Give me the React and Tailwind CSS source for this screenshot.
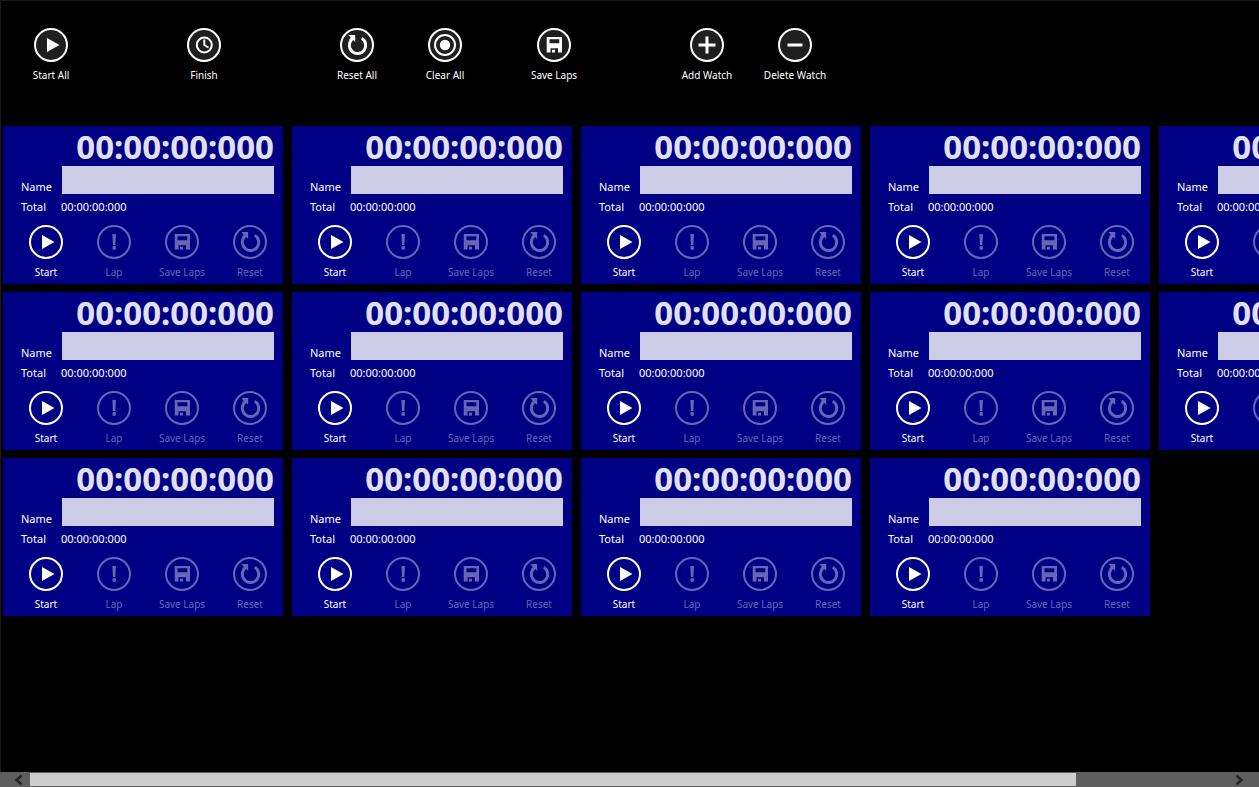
import { cva } from "class-variance-authority";

const glyphs = {
  play: <path d="M13 10 L25.5 17 L13 24 Z" fill="currentColor" />,
  clock: (
    <g fill="none" stroke="currentColor" strokeWidth="2">
      <circle cx="17.3" cy="17" r="7.5" />
      <path d="M17.3 11.5 V17 L21.5 19.5" />
    </g>
  ),
  reset: (
    <g>
      <path d="M21.8 10.3 A8.2 8.2 0 1 1 11.5 11.7" fill="none" stroke="currentColor" strokeWidth="3" />
      <path d="M8.3 7 H15.2 V13.9 L13.2 12 L11 14 L9 12 L10.8 9.8 Z" fill="currentColor" />
    </g>
  ),
  target: (
    <g>
      <circle cx="17" cy="17" r="10" fill="none" stroke="currentColor" strokeWidth="2" />
      <circle cx="17" cy="17" r="5.2" fill="currentColor" />
    </g>
  ),
  save: (
    <path
      fillRule="evenodd"
      fill="currentColor"
      d="M9.7 9 H25 V24.5 H21 V20.2 H13.5 V24.5 H9.7 Z M12.5 11.3 V15.3 H22.3 V11.3 Z M15 21.8 H18 V24.5 H15 Z"
    />
  ),
  alert: (
    <g fill="currentColor">
      <path d="M15.4 9 H18.9 L18.4 20 H15.9 Z" />
      <circle cx="17.2" cy="23" r="1.9" />
    </g>
  ),
  plus: <path d="M8.5 17 H25.5 M17 8.5 V25.5" fill="none" stroke="currentColor" strokeWidth="3" />,
  minus: <path d="M9.5 17 H24.5" fill="none" stroke="currentColor" strokeWidth="3" />,
};

const barButton = cva("flex shrink-0 flex-col items-center gap-[5px] text-[10px] leading-4", {
  variants: {
    size: { bar: "w-22", card: "w-17" },
    disabled: { true: "text-[#6666b5]", false: "text-white" },
  },
});

const AppBarButton = ({ icon, label, size = "bar", disabled = false }) => (
  <button type="button" disabled={disabled} className={barButton({ size, disabled })}>
    <svg viewBox="0 0 34 34" className="size-[34px]" aria-hidden="true">
      <circle
        cx="17"
        cy="17"
        r="16"
        fill={size === "bar" ? "#1f1f1f" : "none"}
        stroke="currentColor"
        strokeWidth="2"
      />
      {glyphs[icon]}
    </svg>
    <span className="whitespace-nowrap">{label}</span>
  </button>
);

const Toolbar = () => (
  <header className="flex pt-[27px] pl-[6px]">
    <div className="flex gap-[65px]">
      <AppBarButton icon="play" label="Start All" />
      <AppBarButton icon="clock" label="Finish" />
      <AppBarButton icon="reset" label="Reset All" />
    </div>
    <AppBarButton icon="target" label="Clear All" />
    <div className="ml-[21px] flex gap-[65px]">
      <AppBarButton icon="save" label="Save Laps" />
      <AppBarButton icon="plus" label="Add Watch" />
    </div>
    <AppBarButton icon="minus" label="Delete Watch" />
  </header>
);

const StopWatch = ({ id, time, total }) => (
  <section className="h-[158px] bg-[#000084] pt-[3px] text-[11px] leading-4 text-white">
    <div className="pr-[9px] text-right text-[33px] leading-9 font-bold text-[#e0e0f2]">{time}</div>
    <div className="mt-px flex items-end pr-[9px] pl-[18px]">
      <label htmlFor={id} className="w-[41px] leading-[14px]">
        Name
      </label>
      <input id={id} type="text" className="h-7 min-w-0 flex-1 bg-[#cccce6] px-2 text-black outline-none" />
    </div>
    <div className="mt-[5px] flex pl-[18px]">
      <span className="w-10">Total</span>
      <span>{total}</span>
    </div>
    <div className="mt-[10px] flex pl-[9px]">
      <AppBarButton size="card" icon="play" label="Start" />
      <AppBarButton size="card" icon="alert" label="Lap" disabled />
      <AppBarButton size="card" icon="save" label="Save Laps" disabled />
      <AppBarButton size="card" icon="reset" label="Reset" disabled />
    </div>
  </section>
);

const ScrollBar = () => (
  <div className="flex h-[15px] bg-[#5e5e5e] text-[#222222]">
    <button type="button" aria-label="Scroll left" className="flex w-[30px] items-center justify-end pr-[7px]">
      <svg viewBox="0 0 9 10" className="h-[10px] w-[9px]" aria-hidden="true">
        <path d="M7.5 0.5 L2.5 5 L7.5 9.5" fill="none" stroke="currentColor" strokeWidth="2.4" />
      </svg>
    </button>
    <div className="flex-1 py-px">
      <div className="h-full w-[87.2%] bg-[#cdcdcd]" />
    </div>
    <button type="button" aria-label="Scroll right" className="flex w-[30px] items-center pl-[6px]">
      <svg viewBox="0 0 9 10" className="h-[10px] w-[9px]" aria-hidden="true">
        <path d="M1.5 0.5 L6.5 5 L1.5 9.5" fill="none" stroke="currentColor" strokeWidth="2.4" />
      </svg>
    </button>
  </div>
);

const watches = Array.from({ length: 14 }, (_, i) => ({
  id: `watch-${i + 1}`,
  time: "00:00:00:000",
  total: "00:00:00:000",
}));

const App = () => (
  <div className="flex min-h-screen flex-col bg-black font-['Noto_Sans',sans-serif]">
    <div className="flex flex-1 flex-col border-t border-l border-[#1a1a1a]">
      <Toolbar />
      <main className="grid auto-cols-[280px] grid-flow-col grid-rows-[repeat(3,auto)] gap-x-[9px] gap-y-2 overflow-hidden pt-[43px] pl-[2px]">
        {watches.map((watch) => (
          <StopWatch key={watch.id} {...watch} />
        ))}
      </main>
    </div>
    <ScrollBar />
  </div>
);

export default App;
